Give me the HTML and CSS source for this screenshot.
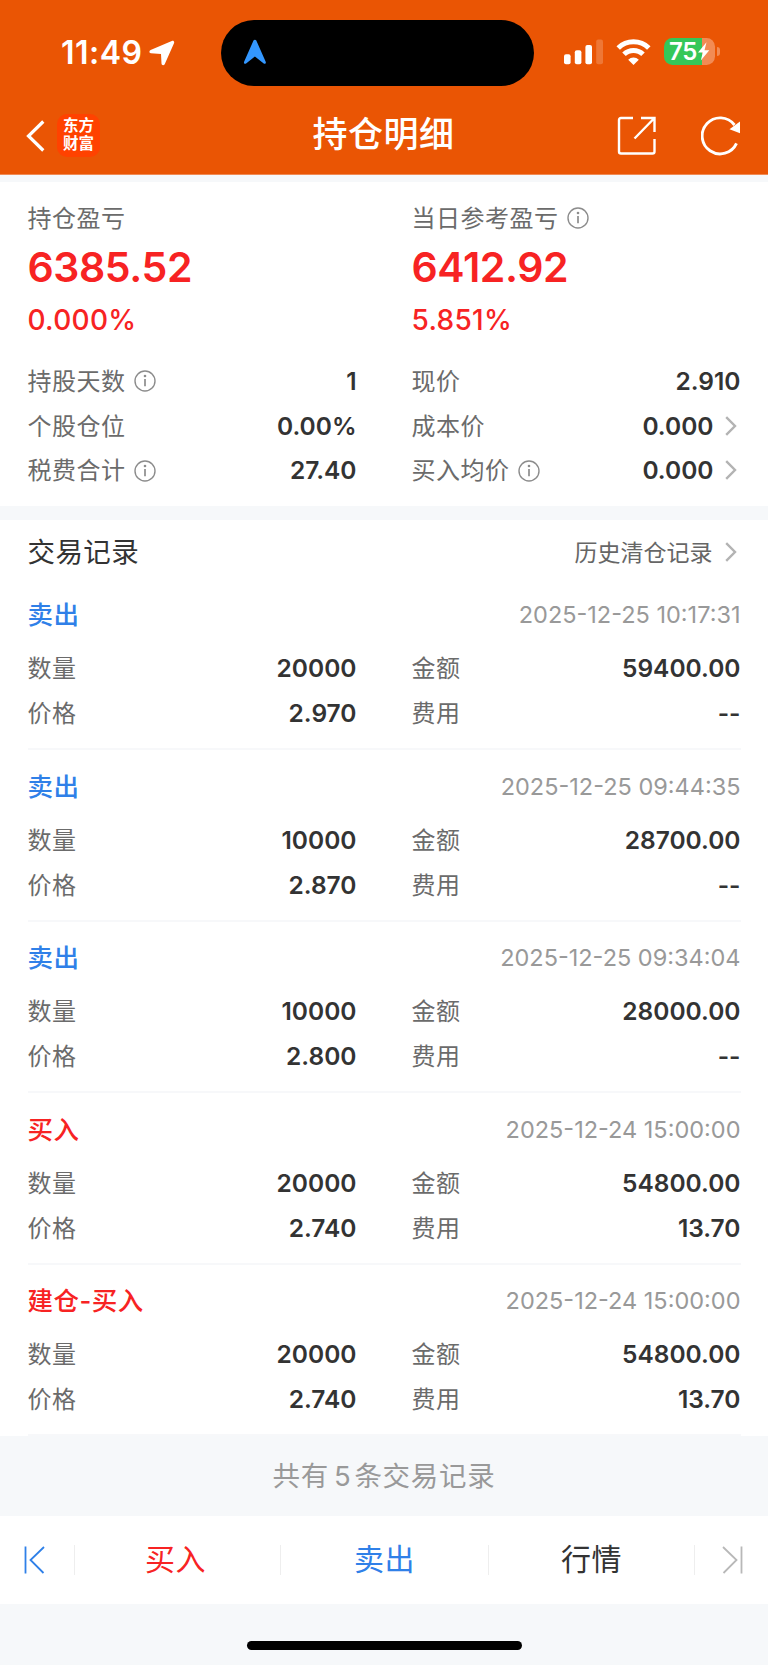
FILE: index.html
```html
<!DOCTYPE html>
<html lang="zh-CN">
<head>
  <meta charset="UTF-8" />
  <meta name="viewport" content="width=device-width, initial-scale=1.0" />
  <title>持仓明细</title>
  <link rel="stylesheet" href="styles.css">
</head>
<body>
  <svg class="sprite" width="0" height="0">
    <symbol id="info" viewBox="0 0 22 22">
      <circle cx="11" cy="11" r="10" fill="none" stroke="#8c8c8c" stroke-width="1.4" />
      <path d="M11 9V16.3" stroke="#8c8c8c" stroke-width="1.7" />
      <circle cx="11" cy="6" r="1.3" fill="#8c8c8c" />
    </symbol>
    <symbol id="arrow" viewBox="0 0 12 20">
      <path d="M1.2 1.2 10 10 1.2 18.8" fill="none" stroke="#b3b3b3" stroke-width="2.4" />
    </symbol>
  </svg>

  <header class="header">
    <div class="status">
      <div class="status-left">
        <span class="time">11:49</span>
        <svg width="26" height="26" viewBox="0 0 26 26"><path d="M22.8.9 1.6 10C0 10.8-.1 13 1.9 13.3L12 14 12.5 23.6C12.6 25.5 14.9 25.8 15.7 24.2L25 3.2C25.7 1.5 24.4.2 22.8.9Z" fill="#fff" /></svg>
      </div>
      <div class="island">
        <svg width="24" height="26" viewBox="0 0 24 26"><path d="M10.5 1.6C11 .3 12.8.3 13.3 1.6L22.7 22.7C23.4 24.6 21.8 25.3 20.7 24.4L11.9 17.6 3.1 24.4C2 25.3.4 24.6 1.1 22.7Z" fill="#3397ff" /></svg>
      </div>
      <div class="status-right">
        <svg class="signal" width="40" height="26" viewBox="0 0 40 26" fill="#fff">
          <rect x="0" y="15.3" width="6.6" height="10" rx="2" />
          <rect x="10.8" y="11.2" width="6.6" height="14.1" rx="2" />
          <rect x="21.4" y="6" width="6.6" height="19.3" rx="2" />
          <rect x="32.2" y=".5" width="6.8" height="24.8" rx="2" opacity=".2" />
        </svg>
        <svg class="wifi" width="35" height="26" viewBox="0 0 35 26">
          <path d="M2.2 9A22 22 0 0 1 32.8 9" fill="none" stroke="#fff" stroke-width="5" />
          <path d="M8 15.3A13.5 13.5 0 0 1 27 15.3" fill="none" stroke="#fff" stroke-width="5" />
          <path d="M17.5 26 12.2 20.7A7.5 7.5 0 0 1 22.8 20.7Z" fill="#fff" />
        </svg>
        <div class="battery">
          <span>75</span>
          <svg width="13" height="19" viewBox="0 0 13 19"><path d="M9.5.3 1 10.6H5.8L3.8 18.6 12.3 8.2H7.5Z" fill="#fff" /></svg>
        </div>
        <i class="battery-cap"></i>
      </div>
    </div>
    <nav class="navbar">
      <div class="nav-left">
        <svg width="19" height="32" viewBox="0 0 19 32"><path d="M17.3 1.5 2.5 16 17.3 30.5" fill="none" stroke="#fff" stroke-width="3.2" /></svg>
        <div class="logo">东方<br>财富</div>
      </div>
      <h1>持仓明细</h1>
      <div class="nav-right">
        <svg width="40" height="40" viewBox="0 0 40 40" fill="none" stroke="#fff" stroke-width="2.4">
          <path d="M16 2H4Q2 2 2 4V35.5Q2 37.500 4 37.500H35.5Q37.500 37.500 37.500 35.5V23" />
          <path d="M24 2H37.5V16M37 2.5 17.5 22.5" />
        </svg>
        <svg width="40" height="40" viewBox="0 0 40 40">
          <path d="M35.5 27.4A18 18 0 1 1 33.5 9" fill="none" stroke="#fff" stroke-width="2.9" />
          <path d="M39 5.5V17.2L28.5 13.2Z" fill="#fff" />
        </svg>
      </div>
    </nav>
  </header>

  <main>
    <section class="summary">
      <div class="cols">
        <div class="profit">
          <p class="label">持仓盈亏</p>
          <p class="amount">6385.52</p>
          <p class="percent">0.000%</p>
        </div>
        <div class="profit">
          <p class="label">当日参考盈亏<svg class="info"><use href="#info" /></svg></p>
          <p class="amount">6412.92</p>
          <p class="percent">5.851%</p>
        </div>
      </div>
      <div class="cols">
        <div class="row"><span class="label">持股天数<svg class="info"><use href="#info" /></svg></span><b>1</b></div>
        <div class="row"><span class="label">现价</span><b>2.910</b></div>
        <div class="row"><span class="label">个股仓位</span><b>0.00%</b></div>
        <div class="row"><span class="label">成本价</span><b>0.000<svg class="arrow"><use href="#arrow" /></svg></b></div>
        <div class="row"><span class="label">税费合计<svg class="info"><use href="#info" /></svg></span><b>27.40</b></div>
        <div class="row"><span class="label">买入均价<svg class="info"><use href="#info" /></svg></span><b>0.000<svg class="arrow"><use href="#arrow" /></svg></b></div>
      </div>
    </section>

    <section class="records">
      <div class="records-head">
        <h2>交易记录</h2>
        <a class="history"><span>历史清仓记录</span><svg class="arrow"><use href="#arrow" /></svg></a>
      </div>

      <article class="record">
        <div class="record-head"><h3 class="sell">卖出</h3><time>2025-12-25 10:17:31</time></div>
        <div class="cols">
          <div class="row"><span class="label">数量</span><b>20000</b></div>
          <div class="row"><span class="label">金额</span><b>59400.00</b></div>
          <div class="row"><span class="label">价格</span><b>2.970</b></div>
          <div class="row"><span class="label">费用</span><b>--</b></div>
        </div>
      </article>

      <article class="record">
        <div class="record-head"><h3 class="sell">卖出</h3><time>2025-12-25 09:44:35</time></div>
        <div class="cols">
          <div class="row"><span class="label">数量</span><b>10000</b></div>
          <div class="row"><span class="label">金额</span><b>28700.00</b></div>
          <div class="row"><span class="label">价格</span><b>2.870</b></div>
          <div class="row"><span class="label">费用</span><b>--</b></div>
        </div>
      </article>

      <article class="record">
        <div class="record-head"><h3 class="sell">卖出</h3><time>2025-12-25 09:34:04</time></div>
        <div class="cols">
          <div class="row"><span class="label">数量</span><b>10000</b></div>
          <div class="row"><span class="label">金额</span><b>28000.00</b></div>
          <div class="row"><span class="label">价格</span><b>2.800</b></div>
          <div class="row"><span class="label">费用</span><b>--</b></div>
        </div>
      </article>

      <article class="record">
        <div class="record-head"><h3 class="buy">买入</h3><time>2025-12-24 15:00:00</time></div>
        <div class="cols">
          <div class="row"><span class="label">数量</span><b>20000</b></div>
          <div class="row"><span class="label">金额</span><b>54800.00</b></div>
          <div class="row"><span class="label">价格</span><b>2.740</b></div>
          <div class="row"><span class="label">费用</span><b>13.70</b></div>
        </div>
      </article>

      <article class="record">
        <div class="record-head"><h3 class="buy">建仓-买入</h3><time>2025-12-24 15:00:00</time></div>
        <div class="cols">
          <div class="row"><span class="label">数量</span><b>20000</b></div>
          <div class="row"><span class="label">金额</span><b>54800.00</b></div>
          <div class="row"><span class="label">价格</span><b>2.740</b></div>
          <div class="row"><span class="label">费用</span><b>13.70</b></div>
        </div>
      </article>
    </section>

    <p class="total">共有<span>5</span>条交易记录</p>
  </main>

  <footer class="tabs">
    <a class="step"><svg width="22" height="28" viewBox="0 0 22 28" fill="none" stroke="#2f80e8" stroke-width="1.8"><path d="M1.5.5V27.5M20 1 6.5 14 19.5 27" /></svg></a>
    <a class="tab buy">买入</a>
    <a class="tab sell">卖出</a>
    <a class="tab">行情</a>
    <a class="step"><svg width="22" height="28" viewBox="0 0 22 28" fill="none" stroke="#b8b8b8" stroke-width="1.8"><path d="M20.5.5V27.5M2 1 15.5 14 2.5 27" /></svg></a>
  </footer>
  <div class="home"><i></i></div>
</body>
</html>
```
FILE: styles.css
```css
* {
  box-sizing: border-box;
}
body {
  width: 768px;
  margin: 0;
  font-family: Inter, "Noto Sans CJK SC", sans-serif;
  background: #f6f8fa;
  color: #333;
}
h1, h2, h3, p {
  margin: 0;
}
svg {
  display: block;
  flex: none;
}
.sprite {
  position: absolute;
}

/* header */
.header {
  height: 175px;
  background: #ea5504;
  border-bottom: 1px solid #f08a54;
  color: #fff;
}
.status {
  display: grid;
  grid-template-columns: 221px 313px 1fr;
  height: 104px;
  padding-top: 20px;
}
.status-left {
  display: flex;
  align-items: center;
  height: 65px;
  padding-left: 61px;
}
.time {
  width: 88px;
  font-size: 32px;
  font-weight: 600;
  letter-spacing: 0.5px;
}
.island {
  display: flex;
  align-items: center;
  height: 66px;
  padding: 0 0 3px 22px;
  border-radius: 33px;
  background: #000;
}
.status-right {
  display: flex;
  align-items: center;
  height: 63px;
  padding-left: 30px;
}
.wifi {
  margin: 0 13px 0 12px;
}
.battery {
  display: flex;
  align-items: center;
  width: 51px;
  height: 27px;
  padding-left: 5px;
  border-radius: 8.5px;
  background: linear-gradient(to right, #34c759 38px, #f28b54 38px);
  font-size: 24px;
  font-weight: 600;
  letter-spacing: -0.3px;
}
.battery-cap {
  width: 3px;
  height: 9px;
  margin-left: 2px;
  border-radius: 0 4px 4px 0;
  background: #f28b54;
}
.navbar {
  display: grid;
  grid-template-columns: 1fr auto 1fr;
  align-items: center;
  height: 63px;
  padding: 0 27px 0 26px;
}
.nav-left {
  display: flex;
  align-items: center;
  gap: 12px;
}
.logo {
  width: 43px;
  height: 43px;
  padding-top: 3px;
  border-radius: 10px;
  background: #ff4200;
  font-size: 15.5px;
  font-weight: 700;
  line-height: 18px;
  text-align: center;
}
.navbar h1 {
  padding-bottom: 3px;
  font-size: 35px;
  font-weight: 500;
  line-height: 57px;
  letter-spacing: 0.5px;
}
.nav-right {
  display: flex;
  justify-content: flex-end;
  gap: 44px;
}

/* shared rows */
.cols {
  display: grid;
  grid-template-columns: 1fr 1fr;
  column-gap: 55px;
}
.row {
  display: flex;
  align-items: center;
  justify-content: space-between;
  height: 44.7px;
}
.row b {
  display: flex;
  align-items: center;
  font-size: 24.5px;
  font-weight: 600;
}
.label {
  display: flex;
  align-items: center;
  padding-bottom: 3px;
  color: #6b6b6b;
  font-size: 24px;
  font-weight: 400;
  letter-spacing: 0.5px;
}
.info {
  width: 22px;
  height: 22px;
  margin: 4px 0 0 8px;
}
.arrow {
  width: 12px;
  height: 20px;
  margin: 0 4px 0 11px;
}
.buy {
  color: #f72323;
}
.sell {
  color: #2f80e8;
}

/* summary */
.summary {
  height: 324px;
  margin-top: 7px;
  padding: 16px 27.5px 0;
  background: #fff;
}
.profit {
  margin-bottom: 15px;
  color: #f72323;
}
.profit .label {
  height: 40px;
  padding-bottom: 4px;
}
.amount {
  font-size: 41px;
  font-weight: 600;
  line-height: 59px;
  letter-spacing: -0.4px;
}
.percent {
  font-size: 28px;
  font-weight: 550;
  line-height: 46.5px;
  letter-spacing: 0.3px;
}

/* records */
.records {
  margin-top: 14px;
  padding: 0 27.5px;
  background: #fff;
}
.records-head {
  display: flex;
  align-items: center;
  justify-content: space-between;
  height: 58.5px;
  padding-top: 6px;
}
.records-head h2 {
  padding-bottom: 4px;
  font-size: 27.5px;
  font-weight: 400;
  letter-spacing: 0.4px;
}
.history {
  display: flex;
  align-items: center;
  color: #666;
  font-size: 23px;
}
.history span {
  margin-right: 1px;
  padding-bottom: 3px;
}
.record {
  height: 171.5px;
  padding-top: 16.5px;
  border-bottom: 2px solid #f7f8fa;
}
.record-head {
  display: flex;
  align-items: center;
  justify-content: space-between;
  height: 40px;
  margin-bottom: 11px;
}
.record-head h3 {
  padding-bottom: 5px;
  font-size: 25.5px;
  font-weight: 500;
  letter-spacing: 0.5px;
}
.record-head time {
  padding-bottom: 1px;
  color: #999;
  font-size: 23.5px;
}
.total {
  height: 80px;
  color: #999;
  font-size: 27.5px;
  font-weight: 400;
  line-height: 80px;
  letter-spacing: 0.7px;
  text-align: center;
}
.total span {
  margin: 0 3px 0 5px;
}

/* bottom tabs */
.tabs {
  display: grid;
  grid-template-columns: 74px 206px 208px 206px 74px;
  align-items: center;
  height: 88px;
  background: #fff;
}
.step {
  display: flex;
  justify-content: center;
}
.step:first-child {
  padding-right: 4px;
}
.tab {
  height: 30px;
  border-left: 1px solid #eee;
  font-size: 30px;
  line-height: 28px;
  letter-spacing: 0.5px;
  text-align: center;
}
.tab.buy {
  padding-right: 4px;
}
.step:last-child {
  height: 30px;
  padding: 1px 0 0 1px;
  border-left: 1px solid #eee;
}
.home {
  display: flex;
  justify-content: center;
  height: 61px;
  padding-top: 37px;
}
.home i {
  width: 275px;
  height: 9px;
  border-radius: 5px;
  background: #000;
}
```
